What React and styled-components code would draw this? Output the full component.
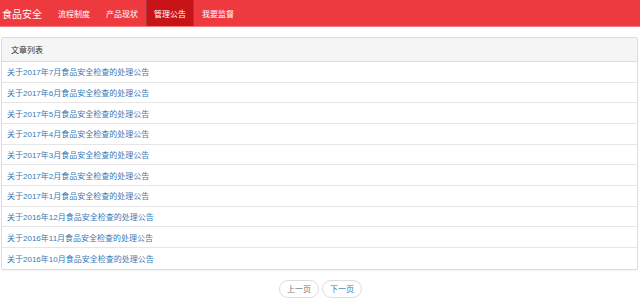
import React from "react";
import styled, { createGlobalStyle } from "styled-components";

const Global = createGlobalStyle`
  html, body { margin: 0; padding: 0; background: #fff; }
  body { font-family: "Liberation Sans", "Noto Sans CJK SC", sans-serif; color: #333; }
  * { box-sizing: border-box; }
`;

const Navbar = styled.nav`
  height: 27px;
  background: #ee3a3e;
  border-bottom: 1px solid #f27a7c;
  display: flex;
  align-items: stretch;
`;

const Brand = styled.a`
  display: flex;
  align-items: center;
  padding: 0 8px 0 2px;
  font-size: 10px;
  color: #fff;
  text-decoration: none;
`;

const NavItem = styled.a`
  display: flex;
  align-items: center;
  padding: 0 8px;
  font-size: 8px;
  color: #fff;
  text-decoration: none;
  background: ${(p) => (p.$active ? "#c81418" : "transparent")};
  box-shadow: ${(p) => (p.$active ? "inset 1px 0 0 #b5393c, inset -1px 0 0 #b5393c" : "none")};
`;

const Panel = styled.div`
  margin: 10px 2px 0 1px;
  border: 1px solid #ddd;
  border-radius: 2px;
  box-shadow: 0 1px 1px rgba(0, 0, 0, 0.05);
  overflow: hidden;
`;

const PanelHeading = styled.div`
  height: 24px;
  padding: 0 9px;
  display: flex;
  align-items: center;
  background: #f5f5f5;
  border-bottom: 1px solid #ddd;
  font-size: 8px;
  color: #333;
`;

const Row = styled.a`
  display: flex;
  align-items: center;
  height: 20.67px;
  padding: 0 5px;
  font-size: 8px;
  color: #337ab7;
  text-decoration: none;
  border-bottom: 1px solid #e6e6e6;
  &:last-child { border-bottom: none; }
`;

const Pager = styled.div`
  display: flex;
  justify-content: center;
  gap: 3px;
  margin-top: 10px;
  padding-left: 1px;
`;

const PageButton = styled.a`
  width: 40px;
  height: 18px;
  display: flex;
  align-items: center;
  justify-content: center;
  border: 1px solid #ddd;
  border-radius: 9px;
  font-size: 8px;
  color: ${(p) => (p.$disabled ? "#777" : "#337ab7")};
  background: #fff;
  text-decoration: none;
`;

const items = [
  "关于2017年7月食品安全检查的处理公告",
  "关于2017年6月食品安全检查的处理公告",
  "关于2017年5月食品安全检查的处理公告",
  "关于2017年4月食品安全检查的处理公告",
  "关于2017年3月食品安全检查的处理公告",
  "关于2017年2月食品安全检查的处理公告",
  "关于2017年1月食品安全检查的处理公告",
  "关于2016年12月食品安全检查的处理公告",
  "关于2016年11月食品安全检查的处理公告",
  "关于2016年10月食品安全检查的处理公告",
];

export default function App() {
  return (
    <>
      <Global />
      <Navbar>
        <Brand>食品安全</Brand>
        <NavItem>流程制度</NavItem>
        <NavItem>产品现状</NavItem>
        <NavItem $active>管理公告</NavItem>
        <NavItem>我要监督</NavItem>
      </Navbar>
      <Panel>
        <PanelHeading>文章列表</PanelHeading>
        {items.map((t) => (
          <Row key={t}>{t}</Row>
        ))}
      </Panel>
      <Pager>
        <PageButton $disabled>上一页</PageButton>
        <PageButton>下一页</PageButton>
      </Pager>
    </>
  );
}
